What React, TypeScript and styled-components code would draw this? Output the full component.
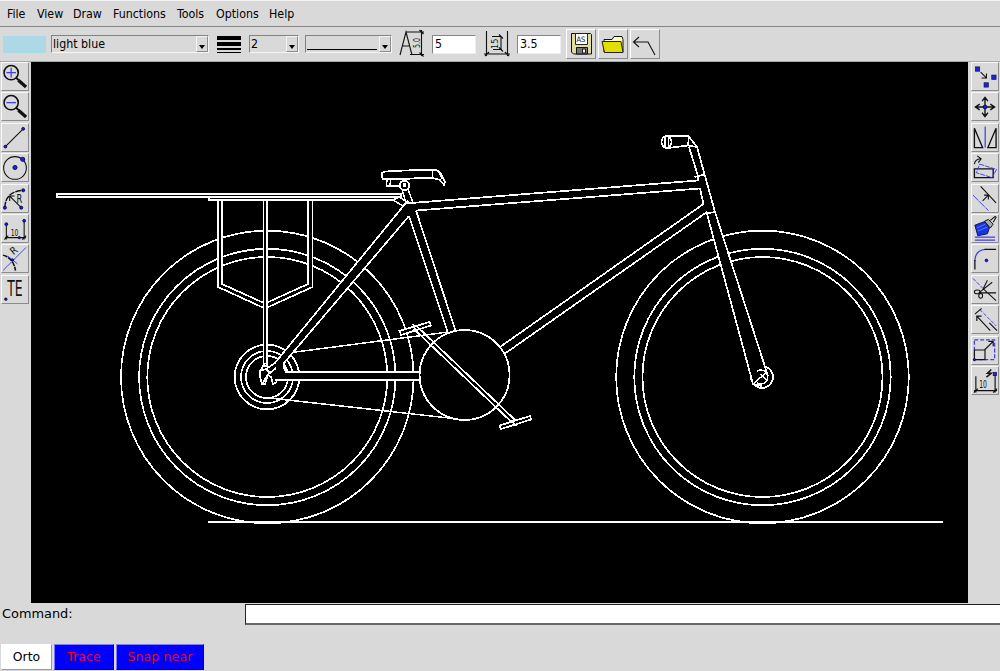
import React from "react";
import styled, { createGlobalStyle } from "styled-components";

const GlobalStyle = createGlobalStyle`
  * { box-sizing: border-box; }
  body { margin: 0; background: #d9d9d9; overflow: hidden; }
`;

const narrow = `"DejaVu Sans Condensed", "DejaVu Sans", sans-serif`;

const Window = styled.div`
  width: 1000px;
  height: 671px;
  display: flex;
  flex-direction: column;
  background: #d9d9d9;
  color: #000;
  font: 12px "DejaVu Sans", sans-serif;
`;
const MenuBar = styled.nav`
  height: 27px;
  display: flex;
  align-items: center;
  padding-left: 7px;
  border-top: 1px solid #f4f4f4;
  border-bottom: 1px solid #858585;
  font-family: ${narrow};
  font-stretch: condensed;
  font-size: 12.3px;
`;
const MenuItem = styled.span<{ $w: number }>`
  width: ${(p) => p.$w}px;
  white-space: nowrap;
`;
const Toolbar = styled.div`
  height: 35px;
  display: flex;
  align-items: center;
  padding-left: 3px;
  border-bottom: 1px solid #a9a9a9;
  font-family: ${narrow};
  font-stretch: condensed;
  font-size: 12.3px;
`;
const Swatch = styled.div`
  width: 43px;
  height: 17px;
  background: #add8e6;
`;
const Combo = styled.div<{ $w: number; $gap: number }>`
  width: ${(p) => p.$w}px;
  height: 18px;
  margin-left: ${(p) => p.$gap}px;
  display: flex;
  align-items: stretch;
  justify-content: space-between;
  padding-left: 1px;
  line-height: 16px;
  border: 1px solid;
  border-color: #828282 #f5f5f5 #f5f5f5 #828282;
`;
const ComboButton = styled.span`
  width: 12px;
  display: flex;
  align-items: flex-end;
  justify-content: center;
  padding-bottom: 2px;
  border: 1px solid;
  border-color: #f5f5f5 #8c8c8c #8c8c8c #f5f5f5;
`;
const LineSample = styled.span`
  flex: 1;
  height: 14px;
  margin-right: 2px;
  border-bottom: 1px solid #000;
`;
const Weights = styled.div`
  width: 24px;
  margin-left: 8px;
  display: flex;
  flex-direction: column;
  gap: 2px;
`;
const Weight = styled.div<{ $h: number }>`
  height: ${(p) => p.$h}px;
  background: #000;
`;
const Glyph = styled.svg<{ $gap: number }>`
  width: 28px;
  height: 30px;
  flex: none;
  margin-left: ${(p) => p.$gap}px;
`;
const Field = styled.div<{ $gap: number }>`
  width: 44px;
  height: 19px;
  margin-left: ${(p) => p.$gap}px;
  padding-left: 2px;
  line-height: 17px;
  background: #fff;
  border: 1px solid;
  border-color: #858585 #eee #eee #858585;
`;
const FileButton = styled.div<{ $gap: number }>`
  width: 30px;
  height: 30px;
  margin-left: ${(p) => p.$gap}px;
  border: 1px solid;
  border-color: #fff #8c8c8c #8c8c8c #fff;
  svg { display: block; width: 28px; height: 28px; }
`;
const Main = styled.main`
  height: 541px;
  display: flex;
`;
const ToolColumn = styled.div<{ $side: "left" | "right" }>`
  width: ${(p) => (p.$side === "left" ? 31 : 32)}px;
  padding-left: ${(p) => (p.$side === "left" ? 1 : 3)}px;
  display: flex;
  flex-direction: column;
  gap: 1.4px;
`;
const ToolButton = styled.div`
  width: 28px;
  height: 29px;
  flex: none;
  border: 1px solid;
  border-color: #f8f8f8 #8c8c8c #8c8c8c #f8f8f8;
  svg { display: block; width: 26px; height: 27px; overflow: visible; }
`;
const Canvas = styled.svg`
  width: 937px;
  height: 541px;
  background: #000;
  display: block;
`;
const CommandRow = styled.div`
  height: 41px;
  display: flex;
  align-items: flex-start;
  padding: 1px 0 0 2px;
  font-size: 12.9px;
`;
const CommandLabel = styled.label`
  width: 243px;
  line-height: 20px;
`;
const CommandBox = styled.div`
  flex: 1;
  height: 21px;
  background: #fff;
  border-style: solid;
  border-color: #222 transparent #666 #222;
  border-width: 1px 0 2px 1px;
`;
const StatusRow = styled.div`
  height: 27px;
  display: flex;
  gap: 2px;
  padding-left: 1px;
`;
const Toggle = styled.div<{ $w: number; $on?: boolean }>`
  width: ${(p) => p.$w}px;
  height: 26px;
  line-height: 24px;
  text-align: center;
  font-size: 12.4px;
  letter-spacing: ${(p) => (p.$on ? 0.2 : 0)}px;
  background: ${(p) => (p.$on ? "#0000ff" : "#fff")};
  color: ${(p) => (p.$on ? "#f00018" : "#000")};
  border: 1px solid;
  border-color: ${(p) => (p.$on ? "#7c7cff #0000a8 #0000a8 #7c7cff" : "#fff #999 #999 #fff")};
`;

const menus: [string, number][] = [
  ["File", 30], ["View", 36], ["Draw", 40], ["Functions", 64], ["Tools", 39], ["Options", 53], ["Help", 30],
];

const K = { fill: "none", stroke: "#111", strokeWidth: 1.1 };
const B = { fill: "none", stroke: "#4040e8", strokeWidth: 1 };
const Dot = ({ x, y, r = 2 }: { x: number; y: number; r?: number }) => (
  <circle cx={x} cy={y} r={r} fill="#2020e0" stroke="#000030" strokeWidth=".8" />
);
const Sq = ({ x, y, s = 4.5 }: { x: number; y: number; s?: number }) => (
  <rect x={x} y={y} width={s} height={s} fill="#2020e0" stroke="#101050" strokeWidth=".7" />
);
const txt = { fontFamily: narrow, fontStretch: "condensed" as const, fill: "#111" };

const leftTools = [
  <><circle cx="9.5" cy="9.5" r="7.4" {...K} strokeWidth={1.6} /><path d="M4.500 9.500h10M9.500 4.500v10" {...B} strokeWidth={1.3} /><path d="M14.500 14.500l3 3" {...K} strokeWidth={2} /><path d="M17 17.500l8 7" {...K} strokeWidth={3.4} /></>,
  <><circle cx="9.500" cy="9.500" r="7.400" {...K} strokeWidth={1.6} /><path d="M4.500 9.500h10" {...B} strokeWidth={1.3} /><path d="M14.500 14.500l3 3" {...K} strokeWidth={2} /><path d="M17 17.500l8 7" {...K} strokeWidth={3.4} /></>,
  <><path d="M3.500 23L22 4.500" {...K} /><Dot x={3.5} y={23} r={1.5} /><Dot x={22} y={4.5} r={1.5} /></>,
  <><circle cx="13.500" cy="14" r="11.800" {...K} /><Dot x={13.5} y={13.5} r={2.2} /><Dot x={21.5} y={5} r={2.2} /></>,
  <><path d="M3 23C3 12 10 6 21 5" {...K} strokeWidth={1.5} strokeDasharray="6 1" /><path d="M20 23L8 11M8 16v-5h5" {...K} /><text x="15" y="18" fontSize="12" textLength="6" lengthAdjust="spacingAndGlyphs" {...txt}>R</text><Dot x={3} y={23} r={1.6} /><Dot x={20} y={23} r={1.6} /><Dot x={22} y={5} r={1.6} /></>,
  <><path d="M4.500 9v16M23 6v19M3 23h22M2.500 25l4-4M21 25l4-4" {...K} /><text x="9" y="21" fontSize="9.500" textLength="8" lengthAdjust="spacingAndGlyphs" {...txt}>10</text><Dot x={4.5} y={9} r={1.5} /><Dot x={23} y={5.5} r={1.5} /><Dot x={18} y={23} r={1.2} /></>,
  <><path d="M1 10Q12 13 14 26" {...K} strokeWidth={1.6} strokeDasharray="5 1" /><path d="M1 26L25 2M6 11l10 8" {...B} /><text x="12" y="10" fontSize="10.500" transform="rotate(-40 12 10)" {...txt}>R</text><Dot x={11} y={15} r={1.2} /></>,
  <><text x="5.500" y="20.500" fontSize="22" textLength="16" lengthAdjust="spacingAndGlyphs" {...txt}>TE</text><Dot x={4} y={23.5} r={1.3} /></>,
];

const rightTools = [
  <><Sq x={3.500} y={3.500} /><Sq x={20.500} y={12} /><Sq x={12.500} y={20} /><path d="M9 9l6 6M15 10.500V15h-5" {...K} /></>,
  <><path d="M13.500 4v20M3.500 14h20M10.500 8l3-4 3 4M10.500 20l3 4 3-4M8 11l-4.500 3L8 17M19 11l4.500 3-4.500 3" {...K} strokeWidth={1.4} /><Dot x={13.5} y={14} /></>,
  <><path d="M2.500 4v20h8.500ZM25 4v20h-8.500Z" {...K} strokeWidth={1.4} /><path d="M13.700 2v22" {...B} strokeWidth={1.3} /></>,
  <><path d="M2.500 15H22v9H2.500Z" {...K} strokeWidth={1.4} /><path d="M8 10l17.500 5.500-4.500 8.500L4.500 19Z" {...B} strokeDasharray="5 1" /><path d="M2.500 10Q3 5 9 4.500M5.500 1.500l4 3-3 4" {...K} /></>,
  <><path d="M9 1l16 17" {...K} /><path d="M1 10l16 16" {...B} strokeDasharray="8 1" /><path d="M11 16l6-6M12.500 10H17v4.500" {...K} /></>,
  <><path d="M3 10l11-4 4 7-2 6-10 2Z" fill="#1438dc" stroke="#101058" /><path d="M5 13l9-4M6 16l10-4" stroke="#5c78ff" /><path d="M13 6l4-2 5 5-3 4Z" fill="#aaa" stroke="#111" /><path d="M19 5l5-4 1 1-3 5" {...K} /><path d="M3 22.500h21M3 25.500h21" {...B} strokeWidth={1.3} /></>,
  <><path d="M3 16Q3 5 14 4" {...B} strokeWidth={1.3} /><path d="M3 15v10M13 4h12" {...K} strokeWidth={1.3} /><Dot x={15} y={15.5} r={1.4} /></>,
  <><path d="M1 2l10 10" {...B} strokeDasharray="4 1.500" /><path d="M7 17L21 6M11 14l5-10M12 13l13 12M8 17h17" {...K} strokeWidth={1.1} /><ellipse cx="5.500" cy="16" rx="3" ry="2" {...K} /><ellipse cx="9" cy="20" rx="2" ry="2.500" {...K} /></>,
  <><path d="M8 3l17 17" {...B} strokeDasharray="4 1.500" /><path d="M3 8l7-6" {...K} /><path d="M5 10l14 15M5 15v-5h5M18 17l8 8" {...K} strokeWidth={1.2} /></>,
  <><path d="M2.500 2.500H23.500v20.500H2.500Z" {...B} strokeDasharray="4 2" strokeWidth={1.3} /><path d="M2.500 13h11v10h-11ZM13 13l9-9M17 4h5v5" {...K} strokeWidth={1.2} /><Dot x={2.5} y={23} r={1.2} /></>,
  <><path d="M4 9v17M24 7v19M2 24h24M2 26l4-4M22 26l4-4" {...K} strokeWidth={1.2} /><text x="7.500" y="21.500" fontSize="10" textLength="8" lengthAdjust="spacingAndGlyphs" {...txt}>10</text><path d="M20 2l-4 4h4l-5 4" {...K} strokeWidth={1.5} /><Sq x={22} y={5} s={3.5} /></>,
];

const Arrow = () => (
  <svg width="6" height="4"><path d="M0 0h6L3 4Z" fill="#000" /></svg>
);

const Wheel = ({ x }: { x: number }) => (
  <>{[146.3, 128.2, 120].map((r) => <circle key={r} cx={x} cy={377} r={r} />)}</>
);

const Bicycle = () => (
  <Canvas viewBox="31 62 937 541" fill="none" stroke="#fff" strokeWidth="1.7" shapeRendering="crispEdges">
    <path d="M208 522H943" />
    <Wheel x={267.3} />
    <Wheel x={762.5} />
    {[32.3, 26, 21].map((r) => <circle key={r} cx="267" cy="377" r={r} />)}
    <path d="M284 353.500L452 331.500M265 397.500L467 420" strokeWidth="1.500" />
    <g fill="#000">
      <path d="M218 200V287L265 308.500L312.500 287V200H308V284L265 303.500L222 284V200Z" />
      <path d="M263.500 200V366H267V200Z" />
      <path d="M57 194H401V197H57Z" />
      <path d="M209 197V200H397" fill="none" />
      <path d="M286 372H421V380H275L268 374L275 363L405 204L409 216L284 363Z" stroke="none" />
      <path d="M405 204L275 363L266 369M409 216L284 363V368L286 372H421M421 380H275" fill="none" />
      <path d="M412 203L698 180.500L703 204L503 345L506 353L706 212L700 188.500L416 210.500Z" stroke="none" />
      <path d="M405 203.500L698 180.500V176L689 147M416 210.500L700 188.500L703.500 204L500 347M505 353.500L707 212" fill="none" />
      <path d="M409 216L448 333L456 332L416 210.500" />
      <circle cx="464.600" cy="375" r="45" />
      <path d="M399.500 331L429.500 322L431 325.500L401 335ZM499.500 425.500L530 416L531 419.500L501 429Z" />
      <path d="M413.700 328.800L512.700 423.200M416.600 326L515.600 420.500M413 324l3 7M511 420l5 6" fill="none" />
      <circle cx="762" cy="377" r="11" />
      <path d="M707 214L753 384L762 386L768 374L715 212Z" stroke="none" />
      <path d="M707 214L753 384L762 386M768 376L715 212L697 147M694.500 177L705 174.500M705 213.500L716 212" fill="none" />
      <path d="M757 371A7 7 0 1 1 757 383M754 383l12-10M760 374l8 7" fill="none" strokeWidth="1.400" />
      <path d="M667 136H688.500L697 147L688 145.500L668 148Z" />
      <path d="M689 136L688 146" fill="none" />
      <ellipse cx="666.500" cy="142" rx="5" ry="6" />
      <path d="M665 137v10M668.500 136v12" strokeWidth="1.200" />
      <path d="M387 179L386.500 186H400M391 179L390 185" fill="none" strokeWidth="1.500" />
      <path d="M383 179Q381 177 382 173L385 171.500L416 170H436Q441 172 442 176L445 182L444 185L440 180L432 178L420 178L404 179Z" />
      <path d="M432 171v8M438 171l4 8" strokeWidth="1" />
      <path d="M402 189L406 203H413L408 189M393 200l6-3 8 5M393 200l10 6 5-5" strokeWidth="1.500" />
      <circle cx="404.500" cy="185.500" r="4.800" />
      <circle cx="404.500" cy="185" r="1" fill="#fff" />
    </g>
    <path d="M265 363L260 371V377L262 384h3l3-9 3 2 2 7 4-2M260 371l6-2 4 4 6-5M262 384l7-11" />
  </Canvas>
);

export default function App() {
  return (
    <Window>
      <GlobalStyle />
      <MenuBar>{menus.map(([m, w]) => <MenuItem key={m} $w={w}>{m}</MenuItem>)}</MenuBar>
      <Toolbar>
        <Swatch />
        <Combo $gap={5} $w={158}>light blue<ComboButton><Arrow /></ComboButton></Combo>
        <Weights>{[4, 4, 2, 1].map((h, i) => <Weight key={i} $h={h} />)}</Weights>
        <Combo $gap={8} $w={50}>2<ComboButton><Arrow /></ComboButton></Combo>
        <Combo $gap={6} $w={87}><LineSample /><ComboButton><Arrow /></ComboButton></Combo>
        <Glyph $gap={6} viewBox="0 0 28 30">
          <path d="M2 26L8 3L14 26M5 17h6M8 3h18M12 25.500h14M23.500 1v26M21.500 1l4 4M21.500 23.500l4 4" {...K} />
          <text transform="translate(22 19) rotate(-90)" fontSize="8.500" textLength="10" lengthAdjust="spacingAndGlyphs" {...txt}>5.0</text>
        </Glyph>
        <Field $gap={6}>5</Field>
        <Glyph $gap={7} viewBox="0 0 28 30">
          <path d="M3.500 2v25M24.500 2v25M1 25h26M2 27l4-4M22 23l4 4M18 7v14M9 7.500h9M16 5.500l4 4M10 20.500h9M16 18.500l4 4" {...K} />
          <text transform="translate(15 20) rotate(-90)" fontSize="9" {...txt}>15</text>
        </Glyph>
        <Field $gap={6}>3.5</Field>
        <FileButton $gap={5}>
          <svg viewBox="0 0 28 28">
            <path d="M4.500 3.500h19l1 1v19.500H6.500l-2-2Z" fill="#dfdda0" stroke="#111" />
            <path d="M8.500 3.500h12v11h-12Z" fill="#fff" stroke="#222" /><path d="M9.500 17.500h11v6.500h-11Z" fill="#777" stroke="#111" />
            <path d="M15.500 19h3v4h-3Z" fill="#eee" stroke="#222" />
            <text x="9.500" y="12" fontSize="7.500" {...txt}>AS</text>
          </svg>
        </FileButton>
        <FileButton $gap={2}>
          <svg viewBox="0 0 28 28">
            <path d="M5 22V9.500h8l2-3h8l1 3v12.500Z" fill="#ffffc2" stroke="#111" />
            <path d="M3 11.500h19l2 11H5.500Z" fill="#e2df00" stroke="#222" />
          </svg>
        </FileButton>
        <FileButton $gap={2}>
          <svg viewBox="0 0 28 28"><path d="M8 7L2.500 12L8 17M3 12H17L24 25" {...K} /></svg>
        </FileButton>
      </Toolbar>
      <Main>
        <ToolColumn $side="left">
          {leftTools.map((t, i) => <ToolButton key={i}><svg viewBox="0 0 27 27">{t}</svg></ToolButton>)}
        </ToolColumn>
        <Bicycle />
        <ToolColumn $side="right">
          {rightTools.map((t, i) => <ToolButton key={i}><svg viewBox="0 0 27 27">{t}</svg></ToolButton>)}
        </ToolColumn>
      </Main>
      <CommandRow>
        <CommandLabel>Command:</CommandLabel>
        <CommandBox />
      </CommandRow>
      <StatusRow>
        <Toggle $w={51}>Orto</Toggle>
        <Toggle $w={60} $on>Trace</Toggle>
        <Toggle $w={88} $on>Snap near</Toggle>
      </StatusRow>
    </Window>
  );
}
